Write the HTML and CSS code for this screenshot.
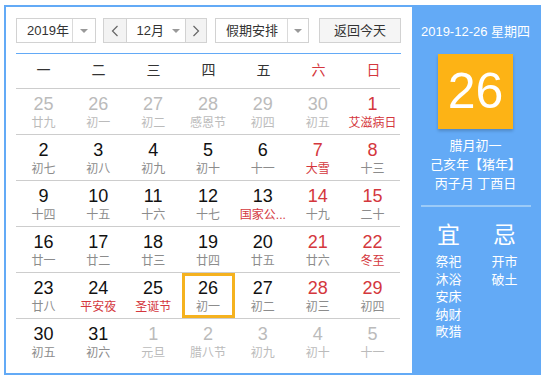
FILE: index.html
```html
<!DOCTYPE html>
<html lang="zh-CN">
<head>
<meta charset="utf-8">
<title>万年历</title>
<link rel="stylesheet" href="styles.css">
</head>
<body>
<div class="cal">
  <div class="main">
    <div class="toolbar">
      <div class="sel sel-year"><span class="sel-text">2019年</span><span class="sel-arrow"><i class="tri"></i></span></div>
      <div class="monthgroup">
        <span class="navbtn"><svg width="8" height="12" viewBox="0 0 8 12"><path d="M6.5 1 L1.5 6 L6.5 11" fill="none" stroke="#666" stroke-width="1.2"/></svg></span>
        <span class="month-text">12月</span><span class="month-arrow"><i class="tri"></i></span>
        <span class="navbtn navbtn-r"><svg width="8" height="12" viewBox="0 0 8 12"><path d="M1.5 1 L6.5 6 L1.5 11" fill="none" stroke="#666" stroke-width="1.2"/></svg></span>
      </div>
      <div class="sel sel-hol"><span class="sel-text">假期安排</span><span class="sel-arrow"><i class="tri"></i></span></div>
      <div class="btn-today">返回今天</div>
    </div>
    <div class="weekhead">
      <span>一</span><span>二</span><span>三</span><span>四</span><span>五</span><span class="red">六</span><span class="red">日</span>
    </div>
    <div class="grid">
      <div class="cell other"><b>25</b><i>廿九</i></div>
      <div class="cell other"><b>26</b><i>初一</i></div>
      <div class="cell other"><b>27</b><i>初二</i></div>
      <div class="cell other"><b>28</b><i>感恩节</i></div>
      <div class="cell other"><b>29</b><i>初四</i></div>
      <div class="cell other"><b>30</b><i>初五</i></div>
      <div class="cell wk"><b>1</b><i class="fest">艾滋病日</i></div>

      <div class="cell"><b>2</b><i>初七</i></div>
      <div class="cell"><b>3</b><i>初八</i></div>
      <div class="cell"><b>4</b><i>初九</i></div>
      <div class="cell"><b>5</b><i>初十</i></div>
      <div class="cell"><b>6</b><i>十一</i></div>
      <div class="cell wk"><b>7</b><i class="fest">大雪</i></div>
      <div class="cell wk"><b>8</b><i>十三</i></div>

      <div class="cell"><b>9</b><i>十四</i></div>
      <div class="cell"><b>10</b><i>十五</i></div>
      <div class="cell"><b>11</b><i>十六</i></div>
      <div class="cell"><b>12</b><i>十七</i></div>
      <div class="cell"><b>13</b><i class="fest">国家公...</i></div>
      <div class="cell wk"><b>14</b><i>十九</i></div>
      <div class="cell wk"><b>15</b><i>二十</i></div>

      <div class="cell"><b>16</b><i>廿一</i></div>
      <div class="cell"><b>17</b><i>廿二</i></div>
      <div class="cell"><b>18</b><i>廿三</i></div>
      <div class="cell"><b>19</b><i>廿四</i></div>
      <div class="cell"><b>20</b><i>廿五</i></div>
      <div class="cell wk"><b>21</b><i>廿六</i></div>
      <div class="cell wk"><b>22</b><i class="fest">冬至</i></div>

      <div class="cell"><b>23</b><i>廿八</i></div>
      <div class="cell"><b>24</b><i class="fest">平安夜</i></div>
      <div class="cell"><b>25</b><i class="fest">圣诞节</i></div>
      <div class="cell today"><b>26</b><i>初一</i></div>
      <div class="cell"><b>27</b><i>初二</i></div>
      <div class="cell wk"><b>28</b><i>初三</i></div>
      <div class="cell wk"><b>29</b><i>初四</i></div>

      <div class="cell"><b>30</b><i>初五</i></div>
      <div class="cell"><b>31</b><i>初六</i></div>
      <div class="cell other"><b>1</b><i>元旦</i></div>
      <div class="cell other"><b>2</b><i>腊八节</i></div>
      <div class="cell other"><b>3</b><i>初九</i></div>
      <div class="cell other"><b>4</b><i>初十</i></div>
      <div class="cell other"><b>5</b><i>十一</i></div>
    </div>
  </div>
  <div class="side">
    <div class="side-date">2019-12-26 星期四</div>
    <div class="bigday">26</div>
    <div class="lunar">
      <div>腊月初一</div>
      <div>己亥年【猪年】</div>
      <div>丙子月 丁酉日</div>
    </div>
    <div class="side-line"></div>
    <div class="yiji">
      <div class="yj-col">
        <div class="yj-title">宜</div>
        <div>祭祀</div><div>沐浴</div><div>安床</div><div>纳财</div><div>畋猎</div>
      </div>
      <div class="yj-col">
        <div class="yj-title">忌</div>
        <div>开市</div><div>破土</div>
      </div>
    </div>
  </div>
</div>
</body>
</html>
```

FILE: styles.css
```css
* { box-sizing: border-box; }
html, body { margin: 0; padding: 0; background: #fff; }
body {
  font-family: "Liberation Sans", "Noto Sans CJK SC", sans-serif;
  color: #333;
}
.cal {
  margin: 5px 0 0 4px;
  width: 537px;
  height: 370px;
  border: 2px solid #63aaf6;
  display: flex;
}
.main {
  width: 406px;
  padding: 11px 11px 0 10px;
  background: #fff;
}
.toolbar {
  display: flex;
  height: 25px;
  font-size: 13px;
  color: #333;
}
.sel {
  display: flex;
  border: 1px solid #d2d2d2;
  background: #fff;
  height: 25px;
}
.sel-text { line-height: 23px; }
.sel-arrow {
  border-left: 1px solid #dadada;
  display: flex;
  align-items: center;
  justify-content: center;
}
.tri {
  display: block;
  width: 0; height: 0;
  border-left: 4px solid transparent;
  border-right: 4px solid transparent;
  border-top: 4px solid #999;
}
.sel-year { width: 80px; }
.sel-year .sel-text { width: 55px; padding-left: 10px; }
.sel-year .sel-arrow { width: 23px; }
.monthgroup {
  margin-left: 7px;
  width: 104px;
  display: flex;
  border: 1px solid #d2d2d2;
  height: 25px;
}
.navbtn {
  width: 23px;
  background: #f3f3f3;
  border-right: 1px solid #d2d2d2;
  display: flex;
  align-items: center;
  justify-content: center;
}
.navbtn-r { border-right: none; border-left: 1px solid #d2d2d2; width: 21px; }
.month-text { width: 39px; text-align: right; line-height: 23px; padding-right: 2px; }
.month-arrow { width: 19px; display: flex; align-items: center; justify-content: center; }
.sel-hol { margin-left: 8px; width: 94px; }
.sel-hol .sel-text { width: 71px; padding-left: 10px; }
.sel-hol .sel-arrow { width: 21px; }
.btn-today {
  margin-left: 10px;
  width: 82px;
  border: 1px solid #d2d2d2;
  background: #f5f5f5;
  text-align: center;
  line-height: 23px;
  height: 25px;
}
.weekhead {
  margin-top: 10px;
  border-top: 1px solid #63aaf6;
  display: grid;
  grid-template-columns: repeat(7, 1fr);
  width: 385px;
  height: 35px;
  line-height: 33px;
  font-size: 14px;
  color: #333;
  text-align: center;
}
.weekhead .red { color: #d4373d; }
.grid {
  display: grid;
  grid-template-columns: repeat(7, 1fr);
  width: 384px;
}
.cell {
  height: 46px;
  border-top: 1px solid #cdcdcd;
  text-align: center;
  padding-top: 4px;
  position: relative;
}
.cell b {
  display: block;
  font-weight: normal;
  font-size: 18px;
  line-height: 22px;
  color: #111;
}
.cell i {
  display: block;
  font-style: normal;
  font-size: 12px;
  line-height: 16px;
  color: #8c8c8c;
  white-space: nowrap;
}
.cell.wk b { color: #d4373d; }
.cell i.fest { color: #d4373d; }
.cell.other b { color: #bbb; }
.cell.other i { color: #bbb; }
.cell.today::after {
  content: "";
  position: absolute;
  left: 1px; right: 0; top: 0; bottom: 0;
  border: 3px solid #f5b21f;
}
.side {
  flex: 1;
  background: #63aaf6;
  color: #fff;
  display: flex;
  flex-direction: column;
  align-items: center;
}
.side-date {
  margin-top: 17px;
  font-size: 13px;
  line-height: 16px;
}
.bigday {
  margin-top: 14px;
  width: 75px;
  height: 75px;
  background: #fdb315;
  box-shadow: 0 2px 3px rgba(0,0,0,0.2);
  font-size: 50px;
  line-height: 75px;
  text-align: center;
  color: #fff;
}
.lunar {
  margin-top: 7px;
  font-size: 13px;
  line-height: 19px;
  text-align: center;
}
.side-line {
  margin-top: 12px;
  width: 110px;
  height: 2px;
  background: #9ccbf8;
}
.yiji {
  display: flex;
  gap: 30px;
  margin-top: 14px;
  margin-left: 2px;
}
.yj-col {
  width: 26px;
  display: flex;
  flex-direction: column;
  align-items: center;
  font-size: 13px;
  line-height: 17.5px;
}
.yj-title {
  font-size: 23px;
  line-height: 28px;
  margin-bottom: 4px;
  font-weight: normal;
}
```
